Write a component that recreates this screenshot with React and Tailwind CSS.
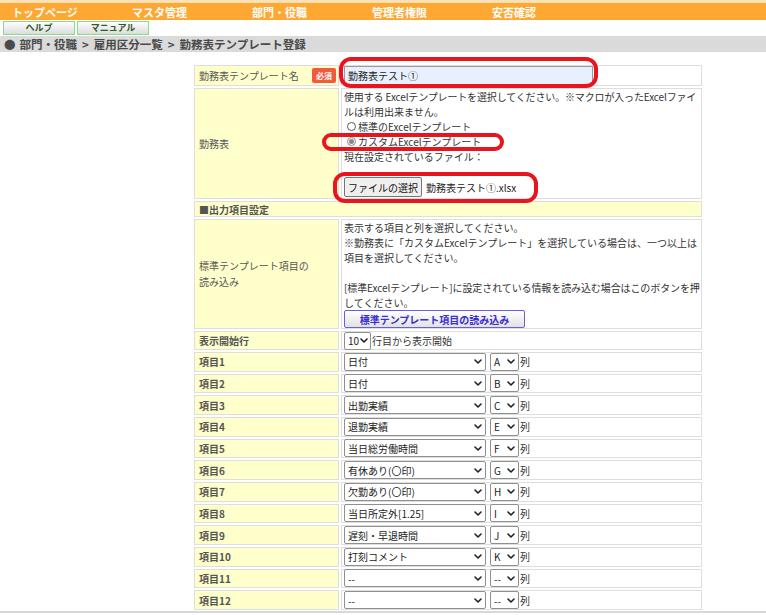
import React from 'react';

const navItems = ['トップページ', 'マスタ管理', '部門・役職', '管理者権限', '安否確認'];

const items = [
    { name: '日付', col: 'A' },
    { name: '日付', col: 'B' },
    { name: '出勤実績', col: 'C' },
    { name: '退勤実績', col: 'E' },
    { name: '当日総労働時間', col: 'F' },
    { name: '有休あり(〇印)', col: 'G' },
    { name: '欠勤あり(〇印)', col: 'H' },
    { name: '当日所定外[1.25]', col: 'I' },
    { name: '遅刻・早退時間', col: 'J' },
    { name: '打刻コメント', col: 'K' },
    { name: '--', col: '--' },
    { name: '--', col: '--' },
];

function Chevron() {
    return (
        <svg width="8" height="5" viewBox="0 0 8 5" className="shrink-0">
            <path d="M1 1l3 3 3-3" fill="none" stroke="#222" strokeWidth="1.6" strokeLinecap="round" strokeLinejoin="round" />
        </svg>
    );
}

function Select({ value, className }) {
    return (
        <div className={`flex items-center justify-between h-[18px] border border-[#8f8f8f] rounded-[2px] bg-white pl-[3px] pr-[3px] text-[#222] ${className}`}>
            <span className="whitespace-nowrap">{value}</span>
            <Chevron />
        </div>
    );
}

function Label({ children, bold, className = '' }) {
    return (
        <div className={`bg-[#ffffcc] border border-[#dedede] flex items-center pl-[4px] text-[#555] ${bold ? 'font-bold' : ''} ${className}`}>
            {children}
        </div>
    );
}

function Value({ children, className = '' }) {
    return <div className={`bg-white border border-[#dedede] pl-[2px] text-[#333] ${className}`}>{children}</div>;
}

function Radio({ checked }) {
    return checked ? (
        <span className="inline-flex items-center justify-center w-[9px] h-[9px] rounded-full border border-[#888] bg-white mr-[2px] ml-[3px]">
            <span className="w-[5px] h-[5px] rounded-full bg-[#888]" />
        </span>
    ) : (
        <span className="inline-block w-[9px] h-[9px] rounded-full border border-[#555] bg-white mr-[2px] ml-[3px]" />
    );
}

export default function App() {
    return (
        <div className="relative w-full min-h-[615px] bg-white font-['Noto_Sans_CJK_JP',sans-serif] text-[10px] leading-[15px]">
            {/* top nav */}
            <div className="h-[20px] bg-[#ffa733] border-t-[3px] border-[#fde0b4] flex items-center pl-[12px]">
                {navItems.map((n) => (
                    <div key={n} className="w-[120px] text-white font-bold text-[11px] leading-[16px]">
                        {n}
                    </div>
                ))}
            </div>

            <div className="flex gap-[2px] ml-[3px] mt-[1px]">
                <div className="w-[72px] h-[14px] border border-[#86df86] bg-gradient-to-b from-white to-[#dcdcdc] flex items-center justify-center text-[#2c5a2c] font-bold text-[9px] leading-[12px]">
                    ヘルプ
                </div>
                <div className="w-[72px] h-[14px] border border-[#86df86] bg-gradient-to-b from-white to-[#dcdcdc] flex items-center justify-center text-[#2c5a2c] font-bold text-[9px] leading-[12px]">
                    マニュアル
                </div>
            </div>

            <div className="mt-[1px] h-[16px] bg-[#dadada] flex items-center pl-[4px] text-[#4a4a4a] font-bold text-[11.5px] whitespace-nowrap">
                <span className="mr-[4px]">●</span>
                <span>部門・役職</span>
                <span className="mx-[5px]">&gt;</span>
                <span>雇用区分一覧</span>
                <span className="mx-[5px]">&gt;</span>
                <span>勤務表テンプレート登録</span>
            </div>

            {/* form */}
            <div className="ml-[194px] mt-[13px] w-[508px] grid grid-cols-[145px_361px] gap-[2px]">
                <Label className="h-[21px] justify-between pr-[2px]">
                    <span>勤務表テンプレート名</span>
                    <span className="w-[24px] h-[15px] bg-[#f25a3c] rounded-[2px] text-white font-bold text-[8px] leading-[15px] text-center">必須</span>
                </Label>
                <Value className="h-[21px] flex items-center">
                    <div className="w-[249px] h-[19px] bg-[#e8f0fe] border border-[#9a9a9a] pl-[3px] flex items-center text-[#222]">
                        勤務表テスト①
                    </div>
                </Value>

                <Label className="h-[111px]">勤務表</Label>
                <Value className="h-[111px]">
                    <div className="whitespace-nowrap tracking-[-0.15px]">使用する Excelテンプレートを選択してください。※マクロが入ったExcelファイ</div>
                    <div>ルは利用出来ません。</div>
                    <div className="flex items-center"><Radio />標準のExcelテンプレート</div>
                    <div className="flex items-center"><Radio checked />カスタムExcelテンプレート</div>
                    <div>現在設定されているファイル：</div>
                    <div className="flex items-center mt-[13px]">
                        <div className="w-[78px] h-[20px] bg-[#efefef] border border-[#767676] rounded-[2px] flex items-center justify-center text-[#111]">
                            ファイルの選択
                        </div>
                        <span className="ml-[4px] text-[#222]">勤務表テスト①.xlsx</span>
                    </div>
                </Value>

                <Label bold className="col-span-2 h-[16px]">■出力項目設定</Label>

                <Label className="h-[110px] leading-[16px]">
                    <span>標準テンプレート項目の<br />読み込み</span>
                </Label>
                <Value className="h-[110px]">
                    <div>表示する項目と列を選択してください。</div>
                    <div className="whitespace-nowrap">※勤務表に「カスタムExcelテンプレート」を選択している場合は、一つ以上は</div>
                    <div>項目を選択してください。</div>
                    <div className="h-[15px]" />
                    <div className="whitespace-nowrap tracking-[-0.1px]">[標準Excelテンプレート]に設定されている情報を読み込む場合はこのボタンを押</div>
                    <div>してください。</div>
                    <div className="w-[181px] h-[18px] border border-[#6b5ce6] rounded-[2px] bg-gradient-to-b from-white to-[#e2e2e2] flex items-center justify-center text-[#3a2fd0] font-bold">
                        標準テンプレート項目の読み込み
                    </div>
                </Value>

                <Label bold className="h-[19px]">表示開始行</Label>
                <Value className="h-[19px] flex items-center">
                    <Select value="10" className="w-[27px] !pr-[2px]" />
                    <span className="ml-[1px]">行目から表示開始</span>
                </Value>

                {items.map((it, i) => (
                    <React.Fragment key={i}>
                        <Label bold className="h-[19.67px]">項目{i + 1}</Label>
                        <Value className="h-[19.67px] flex items-center">
                            <Select value={it.name} className="w-[142px]" />
                            <Select value={it.col} className="w-[29px] ml-[4px]" />
                            <span className="ml-[1px]">列</span>
                        </Value>
                    </React.Fragment>
                ))}
            </div>

            <div className="mt-[1px] h-[2px] bg-[#d8d8d8]" />

            {/* red annotation marks */}
            <div className="absolute left-[339px] top-[57px] w-[259px] h-[31px] border-[4px] border-[#e8141e] rounded-[12px]" />
            <div className="absolute left-[322px] top-[133px] w-[182px] h-[18px] border-[4px] border-[#e8141e] rounded-[9px]" />
            <div className="absolute left-[333px] top-[172px] w-[205px] h-[31px] border-[4px] border-[#e8141e] rounded-[12px]" />
        </div>
    );
}
